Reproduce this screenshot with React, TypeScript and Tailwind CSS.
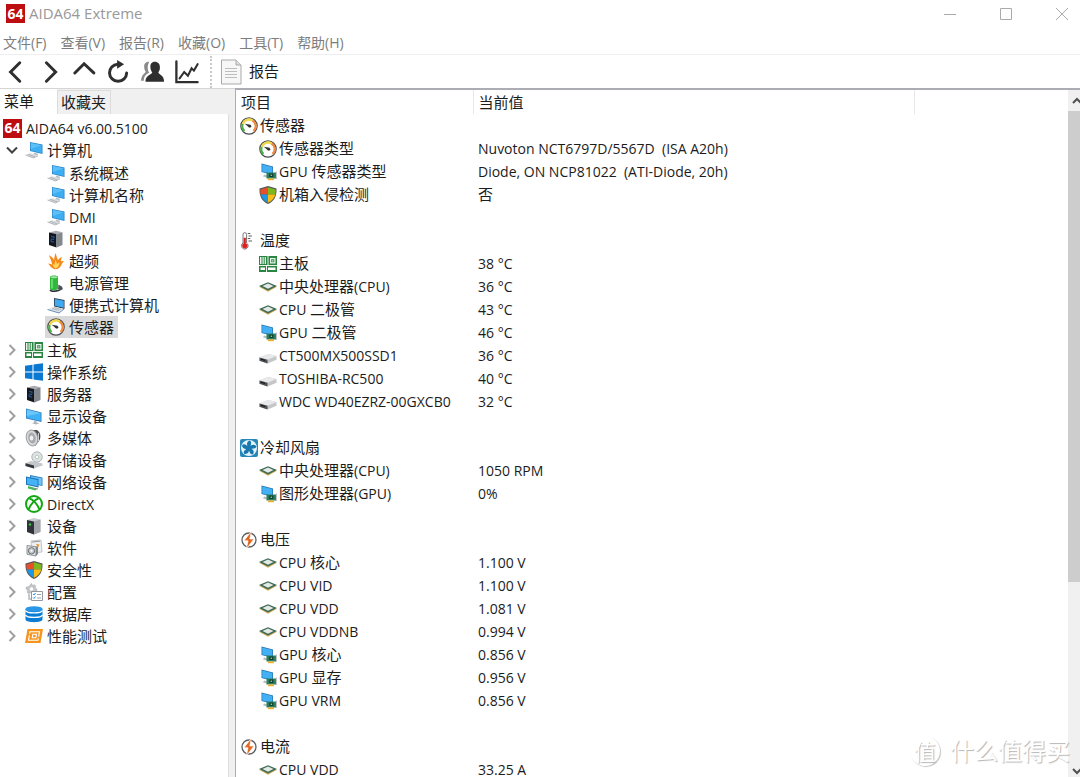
import type { ReactNode } from "react";
import clsx from "clsx";

type IconName =
  | "computer"
  | "server"
  | "flame"
  | "battery"
  | "laptop"
  | "gauge"
  | "board"
  | "windows"
  | "display"
  | "speaker"
  | "storage"
  | "network"
  | "directx"
  | "device"
  | "software"
  | "shield"
  | "config"
  | "database"
  | "benchmark"
  | "gpu"
  | "thermometer"
  | "chip"
  | "drive"
  | "fan"
  | "bolt";

const drawings: Record<IconName, ReactNode> = {
  computer: (
    <>
      <path d="M5 1 17.500 3.500V13L5 10z" fill="#2c86c9" />
      <path d="M5.800 2 16.700 4.300V12L5.800 9.400z" fill="#3eaef3" />
      <path d="M5.800 2 16.700 4.300 5.800 8z" fill="#5cbff8" />
      <path d="M9 11.500l4 1.300-.5 1.700-4-1z" fill="#b9bec3" />
      <path d="M.5 14 5 12.300l8 2L8.500 17z" fill="#d9dcdf" />
      <path d="M.5 14 8.500 17l4.500-2.200M3 13.300l7 2.500" stroke="#9ea4a9" strokeWidth="0.700" fill="none" />
    </>
  ),
  server: (
    <>
      <path d="M2 2.500 9 .8l6.500 1.500-6 1.700z" fill="#a9adb3" />
      <path d="M2 2.500 9.500 4v13.500L2 15z" fill="#14171d" />
      <path d="M9.500 4 15.500 2.300V15l-6 2.500z" fill="#83878e" />
      <path d="M4 6.500l3 .6M4 9l3 .6M4 11.500l3 .6M7 6.500v2M4 9.500v2" stroke="#2467b8" strokeWidth="0.900" />
    </>
  ),
  flame: (
    <>
      <path d="M7 17C4 16 3 13.500 1 11.500c2 .3 3 .5 4 1C5 9 2.500 6 2 3c2.500 1.500 4 3 5 5 .5-3 .8-5 1.500-7C9.500 4 10 6 11 8c1.300-1.300 2-2.500 4-3-.8 1.700-1 3-1 4.500 1-.5 2-.5 3-.3-1.500 1-2 2.500-3 4.500-1.500 2.800-4 4-7 3.300z" fill="#f58a1c" />
      <path d="M8.500 16.500c-2-1-2.500-3-3-4.500 1 .3 1.500.5 2 1 .3-2 .5-3 1-5 1 1.500 1 3 1.500 4 1-.8 1.500-1.300 2.500-1.500-.5 3-1 5-4 6z" fill="#ffd75a" />
    </>
  ),
  battery: (
    <>
      <path d="M3 3c0-2 8-2 8 0v11.500c0 2-8 2.500-8 .5z" fill="#2eb83c" />
      <path d="M3.500 3.200c0-1.300 7-1.300 7 0s-7 1.200-7 0z" fill="#a3e3a3" />
      <path d="M5 5v9.500" stroke="#7be37f" strokeWidth="1.500" />
      <path d="M3 16c1 1.500 5 1.500 9 .3l3.500-2" stroke="#2b3138" strokeWidth="1.500" fill="none" />
      <path d="M11.500 10.500l4 2.500-1.500 3-3-1z" fill="#4b525a" />
    </>
  ),
  laptop: (
    <>
      <path d="M7 2l10.500 2v9L7 10.500z" fill="#2b3d4f" />
      <path d="M7.800 3l9 1.800v7l-9-2z" fill="#3fa9f2" />
      <path d="M.5 13.500l6.500-3 10 2.500-5 4z" fill="#dbe1e6" />
      <path d="M.5 13.500 12 17l5-4" stroke="#5b86ab" strokeWidth="0.900" fill="none" />
      <path d="M5 12.500l7 2M7 11.500l7 2" stroke="#9aa5ae" strokeWidth="0.700" />
    </>
  ),
  gauge: (
    <>
      <circle cx="9" cy="9" r="8.200" fill="#fff" stroke="#4a4c4e" strokeWidth="1.200" />
      <path d="M4.500 14A6.500 6.500 0 0 1 2.800 7" stroke="#45b53f" strokeWidth="2" fill="none" />
      <path d="M2.800 7A6.500 6.500 0 0 1 12.500 3.500" stroke="#f0d94a" strokeWidth="2.400" fill="none" />
      <path d="M12.500 3.500A6.500 6.500 0 0 1 13.500 14" stroke="#f08a3e" strokeWidth="2.200" fill="none" />
      <path d="M4.800 6.800l5.800 1-1.200 3z" fill="#333" />
      <circle cx="10" cy="9.300" r="1.300" fill="#333" />
    </>
  ),
  board: (
    <>
      <path d="M0 1h18v16H0z" fill="#2b8542" />
      <path d="M1 2h1.500v7H1zM3.500 2h1.200v7H3.500zM5.700 2h1.200v7H5.700z" fill="#e9f5eb" />
      <path d="M9 1v9.500M0 10.500h18M7.500 10.500V17" stroke="#fff" strokeWidth="0.900" fill="none" />
      <path d="M11 3h5.500v5.500H11z" fill="#e9f5eb" />
      <path d="M12.200 4.200h3.100v3.100h-3.100z" fill="#2b8542" />
      <path d="M13.200 5.200h1.200v1.200h-1.200z" fill="#fff" />
      <path d="M1.500 12.500h4.500V15H1.500zM9 12.500h7.500V15H9z" fill="#fff" />
    </>
  ),
  windows: (
    <path d="M0 2.800 7.500 1.700v6.800H0zM8.500 1.500 18 .2v8.300H8.500zM0 9.500h7.500v6.800L0 15.200zM8.500 9.500H18v8.300L8.500 16.500z" fill="#0a78d1" />
  ),
  display: (
    <>
      <path d="M1 1.500 16.500 5.500V15L1 11.500z" fill="#2a7fc4" />
      <path d="M1.800 2.600 15.700 6.200v7.700L1.800 10.700z" fill="#41b1f5" />
      <path d="M1.800 2.600 15.700 6.200 1.800 9z" fill="#6bc6f9" />
      <path d="M9 13.500l2.500.6v1.500l3 .7-3.500 1.300-4-1.300 2-.7z" fill="#aeb4b9" />
    </>
  ),
  speaker: (
    <>
      <path d="M6 1h6c3.500 2 4.500 7 2 11l-4 5z" fill="#4a4e53" />
      <ellipse cx="7" cy="9" rx="5.700" ry="8" fill="#d7d9db" stroke="#9da1a4" transform="rotate(-12 7 9)" />
      <ellipse cx="7" cy="9" rx="3.700" ry="5.500" fill="#a7abaf" transform="rotate(-12 7 9)" />
      <ellipse cx="6.500" cy="9" rx="1.800" ry="2.600" fill="#f2f2f2" />
      <path d="M13.500 4v8" stroke="#c9cbcd" />
    </>
  ),
  storage: (
    <>
      <circle cx="12" cy="6" r="5.200" fill="#dfe2e4" stroke="#b0b5b9" />
      <circle cx="12" cy="6" r="1.800" fill="#fff" stroke="#9fc79f" strokeWidth="0.800" />
      <path d="M.5 12.300 6 10l11.500 2.500v2L9 17.500l-8.500-2.500z" fill="#c4c8cb" />
      <path d="M.5 12.300 9 14.500v3L.5 15z" fill="#33373b" />
    </>
  ),
  network: (
    <>
      <path d="M5 2l12.500 2.500V13L5 10.500z" fill="#2f7fc0" />
      <path d="M6 3.200l10.700 2v6.800L6 10z" fill="#6ac4f7" />
      <path d="M1 3.500 13.500 6v8.500L1 11.800z" fill="#1d73b8" />
      <path d="M2 4.700l10.600 2.200v6.400L2 11z" fill="#45b2f4" />
      <path d="M3 13l9 2.500-1.500 2L3 15.500z" fill="#3fba54" />
      <path d="M9 15.500l4 .5" stroke="#8a9096" />
    </>
  ),
  directx: (
    <>
      <circle cx="9" cy="9" r="8" fill="#fff" stroke="#12a812" strokeWidth="2" />
      <path d="M4.500 3.500C7.500 4 12.500 9 14.300 14.200M13.500 3.500C10.500 4 5.500 9 3.700 14.200" fill="none" stroke="#12a812" strokeWidth="2" />
    </>
  ),
  device: (
    <>
      <path d="M2 3l7-2 6.500 1.500V15L9 17.500 2 15z" fill="#c9cccf" />
      <path d="M2 3l7 1.500v13L2 15z" fill="#303438" />
      <path d="M9 4.500 15.500 2.500V15L9 17.500z" fill="#a3a7ab" />
      <circle cx="5" cy="7.500" r="1.200" fill="#34c93d" />
    </>
  ),
  software: (
    <>
      <path d="M6 2l10-1 1 12-10 1z" fill="#eceef0" stroke="#b4b8bc" strokeWidth="0.800" />
      <path d="M7 3l8-.8" stroke="#999" />
      <path d="M2 6.500l9 1.300V17l-9-1.700z" fill="#dfe2e4" stroke="#777c80" strokeWidth="0.800" />
      <path d="M11 7.800l2-1.300V15l-2 2z" fill="#82878b" />
      <circle cx="6.500" cy="11.800" r="3.200" fill="#c5cacd" stroke="#54595e" strokeWidth="0.800" />
      <circle cx="6.500" cy="11.800" r="1" fill="#fff" />
      <path d="M11 5l3.500.5-1.500 3z" fill="#f0922d" />
    </>
  ),
  shield: (
    <>
      <path d="M9 0 17.500 2.500C18 10 15 15.500 9 18 3 15.500 0 10 .5 2.500z" fill="#53585c" />
      <path d="M9 1.200V8.500H1.700C1.300 6.700 1.300 5 1.400 3.400z" fill="#e8502a" />
      <path d="M9 1.200 16.600 3.400c.1 1.600.1 3.300-.3 5.100H9z" fill="#7db81e" />
      <path d="M9 8.500v8.300C5 15 2.700 12.200 1.700 8.500z" fill="#1c98e6" />
      <path d="M9 8.500h7.300C15.300 12.200 13 15 9 16.800z" fill="#f9bd14" />
    </>
  ),
  config: (
    <>
      <path d="M6.500.5l1 2 2-.7 1.200 1.500-.8 1.900 2.100 1-.5 2-2 .3-.6 2-2 .8-1.600-1.500-2 .7-1.200-1.600.8-1.800L1 6l.5-2 2.200-.2z" fill="#c3c6c9" stroke="#a3a8ac" strokeWidth="0.600" />
      <circle cx="6.500" cy="6" r="1.800" fill="#fff" />
      <path d="M6.500 8.500h11v9h-11z" fill="#fff" stroke="#8a8f94" strokeWidth="0.900" />
      <path d="M8 11l1 1 1.500-2M8 14.500l1 1 1.500-2" stroke="#2f8be0" fill="none" />
      <path d="M12 11.500h4M12 15h4" stroke="#9ba0a4" />
      <path d="M4 11v5h2" stroke="#b5b9bd" fill="none" strokeWidth="1.500" />
    </>
  ),
  database: (
    <>
      <path d="M.5 4v10.500c0 3.500 17 3.500 17 0V4z" fill="#0d7dd4" />
      <ellipse cx="9" cy="4" rx="8.500" ry="2.700" fill="#2a96e6" />
      <path d="M.5 5.500c1 3.200 16 3.200 17 0M.5 10c1 3.200 16 3.200 17 0" stroke="#fff" strokeWidth="1.300" fill="none" />
    </>
  ),
  benchmark: (
    <>
      <path d="M2.500 2h15.500l-2.500 14H0z" fill="#f7941d" />
      <path d="M5 4.700h9.500L13 13.300H3.500z" fill="none" stroke="#fff" strokeWidth="1.100" />
      <path d="M7.800 7.200h3.700l-.6 3.600H7.200z" fill="none" stroke="#fff" strokeWidth="1.100" />
      <path d="M3 7.500h2.500M12.500 10.500h3" stroke="#f7941d" strokeWidth="1.300" />
    </>
  ),
  gpu: (
    <>
      <path d="M2.500.5l11.500 3v8.500l-11.500-3z" fill="#2473b3" />
      <path d="M3.200 1.500l10.100 2.600v6.900L3.200 8.400z" fill="#43b0f4" />
      <path d="M5 11.500l3 .8v2.200L4 13.500z" fill="#b7bcc1" />
      <path d="M7.500 9.500h9.500v6H7.500z" fill="#2c7f5d" />
      <path d="M10.300 10.500h4v3.500h-4z" fill="#0e3f2d" />
      <path d="M11.600 11.600h1.500v1.300h-1.500z" fill="#8fd0a9" />
      <path d="M17.400 8.500v7.500" stroke="#a6abae" strokeWidth="0.800" />
      <path d="M9 15.500h6v1.700H9z" fill="#f0ad27" />
    </>
  ),
  thermometer: (
    <>
      <path d="M3 2.500a1.800 1.800 0 0 1 3.600 0V11a3.300 3.300 0 1 1-3.600 0z" fill="#fff" stroke="#66696c" strokeWidth="0.900" />
      <path d="M4 6h1.700v5.500a2.400 2.400 0 1 1-1.700 0z" fill="#dd1f1f" stroke="#dd1f1f" strokeWidth="0.600" />
      <path d="M7.800 1.500h2.500M8.500 4H12M7.800 6.500h2.500M8.500 9H12" stroke="#5d6063" strokeWidth="1.100" />
    </>
  ),
  chip: (
    <>
      <path d="M0 8.800l9 5 9-5-9-1z" fill="#d3ae5e" />
      <path d="M0 8 9 4.200 18 8l-9 4.600z" fill="#3c6a53" />
      <path d="M3.500 8 9 5.600 14.500 8 9 10.800z" fill="#e4e9e6" />
    </>
  ),
  drive: (
    <>
      <path d="M.5 10.500 9 7l8.500 2v3.700L8.500 16.500l-8-2.700z" fill="#c4c6c8" />
      <path d="M.5 10.500 9 7l8.500 2-9 3.700z" fill="#e8e9ea" />
      <path d="M.5 10.500l8 2.200v3.800l-8-2.700z" fill="#4c4f52" />
      <path d="M2 12.200l4 1.200" stroke="#111" />
    </>
  ),
  fan: (
    <>
      <rect width="18" height="18" rx="2" fill="#2687bb" />
      <circle cx="9" cy="9" r="8" fill="#e4f3fa" />
      <g fill="#1878ad">
        <path d="M9 9C6 6.500 6.500 2.500 9.500 1.500c2.500.8 2 4.500-.5 7.500z" />
        <path d="M9 9C6 6.500 6.500 2.500 9.500 1.500c2.500.8 2 4.500-.5 7.500z" transform="rotate(72 9 9)" />
        <path d="M9 9C6 6.500 6.500 2.500 9.500 1.500c2.500.8 2 4.500-.5 7.500z" transform="rotate(144 9 9)" />
        <path d="M9 9C6 6.500 6.500 2.500 9.500 1.500c2.500.8 2 4.500-.5 7.500z" transform="rotate(216 9 9)" />
        <path d="M9 9C6 6.500 6.500 2.500 9.500 1.500c2.500.8 2 4.500-.5 7.500z" transform="rotate(288 9 9)" />
        <circle cx="9" cy="9" r="2.600" />
      </g>
    </>
  ),
  bolt: (
    <>
      <circle cx="9" cy="9" r="7" fill="#fff" stroke="#5a5d60" strokeWidth="1.300" />
      <path d="M11.500 0 4 9.800h4L6.300 18 14 8H9.800z" fill="#e2661f" stroke="#fff" strokeWidth="0.700" />
    </>
  ),
};

function Icon({ name }: { name: IconName }) {
  return (
    <svg viewBox="0 0 18 18" className="size-[18px] shrink-0" aria-hidden="true">
      {drawings[name]}
    </svg>
  );
}

function Logo() {
  return (
    <span className="flex size-[19px] shrink-0 items-center justify-center bg-[#bd0d10] text-[14px] leading-none font-bold text-white">
      64
    </span>
  );
}

// Latin runs are set one step smaller than the Chinese around them
function Label({ text }: { text: string }) {
  const runs = text.match(/[\x20-\x7e°]+|[^\x20-\x7e°]+/g) ?? [];
  return (
    <span className="text-[15px] leading-none whitespace-pre">
      {runs.map((run, i) =>
        /^[\x20-\x7e°]/.test(run) ? (
          <span key={i} className="text-[14px]">
            {run}
          </span>
        ) : (
          run
        ),
      )}
    </span>
  );
}

const menus = ["文件(F)", "查看(V)", "报告(R)", "收藏(O)", "工具(T)", "帮助(H)"];

const computerItems: { label: string; icon: IconName }[] = [
  { label: "系统概述", icon: "computer" },
  { label: "计算机名称", icon: "computer" },
  { label: "DMI", icon: "computer" },
  { label: "IPMI", icon: "server" },
  { label: "超频", icon: "flame" },
  { label: "电源管理", icon: "battery" },
  { label: "便携式计算机", icon: "laptop" },
  { label: "传感器", icon: "gauge" },
];

const categories: { label: string; icon: IconName }[] = [
  { label: "主板", icon: "board" },
  { label: "操作系统", icon: "windows" },
  { label: "服务器", icon: "server" },
  { label: "显示设备", icon: "display" },
  { label: "多媒体", icon: "speaker" },
  { label: "存储设备", icon: "storage" },
  { label: "网络设备", icon: "network" },
  { label: "DirectX", icon: "directx" },
  { label: "设备", icon: "device" },
  { label: "软件", icon: "software" },
  { label: "安全性", icon: "shield" },
  { label: "配置", icon: "config" },
  { label: "数据库", icon: "database" },
  { label: "性能测试", icon: "benchmark" },
];

type Reading = [icon: IconName, label: string, value: string];

const groups: { label: string; icon: IconName; rows: Reading[] }[] = [
  {
    label: "传感器",
    icon: "gauge",
    rows: [
      ["gauge", "传感器类型", "Nuvoton NCT6797D/5567D  (ISA A20h)"],
      ["gpu", "GPU 传感器类型", "Diode, ON NCP81022  (ATI-Diode, 20h)"],
      ["shield", "机箱入侵检测", "否"],
    ],
  },
  {
    label: "温度",
    icon: "thermometer",
    rows: [
      ["board", "主板", "38 °C"],
      ["chip", "中央处理器(CPU)", "36 °C"],
      ["chip", "CPU 二极管", "43 °C"],
      ["gpu", "GPU 二极管", "46 °C"],
      ["drive", "CT500MX500SSD1", "36 °C"],
      ["drive", "TOSHIBA-RC500", "40 °C"],
      ["drive", "WDC WD40EZRZ-00GXCB0", "32 °C"],
    ],
  },
  {
    label: "冷却风扇",
    icon: "fan",
    rows: [
      ["chip", "中央处理器(CPU)", "1050 RPM"],
      ["gpu", "图形处理器(GPU)", "0%"],
    ],
  },
  {
    label: "电压",
    icon: "bolt",
    rows: [
      ["chip", "CPU 核心", "1.100 V"],
      ["chip", "CPU VID", "1.100 V"],
      ["chip", "CPU VDD", "1.081 V"],
      ["chip", "CPU VDDNB", "0.994 V"],
      ["gpu", "GPU 核心", "0.856 V"],
      ["gpu", "GPU 显存", "0.956 V"],
      ["gpu", "GPU VRM", "0.856 V"],
    ],
  },
  {
    label: "电流",
    icon: "bolt",
    rows: [["chip", "CPU VDD", "33.25 A"]],
  },
];

function TitleBar() {
  return (
    <header className="flex h-[27px] shrink-0 items-center pl-1.5">
      <Logo />
      <h1 className="ml-1 flex-1 text-[15px] text-[#999]">AIDA64 Extreme</h1>
      <div className="flex items-center gap-9 pr-2 text-[#aaa]">
        <button aria-label="最小化" className="flex size-5 items-center justify-center">
          <svg viewBox="0 0 14 14" className="size-3.5" stroke="currentColor">
            <path d="M1 7.500h12" />
          </svg>
        </button>
        <button aria-label="最大化" className="flex size-5 items-center justify-center">
          <svg viewBox="0 0 14 14" className="size-3.5" stroke="currentColor" fill="none">
            <path d="M1.500 1.500h11v11h-11z" />
          </svg>
        </button>
        <button aria-label="关闭" className="flex size-5 items-center justify-center">
          <svg viewBox="0 0 14 14" className="size-3.5" stroke="currentColor">
            <path d="M1 1l12 12M13 1 1 13" />
          </svg>
        </button>
      </div>
    </header>
  );
}

function ToolButton({ label, children }: { label: string; children: ReactNode }) {
  return (
    <button aria-label={label} className="flex h-8 w-[34px] items-center justify-center text-[#2f2f2f]">
      <svg
        viewBox="0 0 26 26"
        className="size-6"
        fill="none"
        stroke="currentColor"
        strokeWidth="3.200"
        strokeLinecap="round"
      >
        {children}
      </svg>
    </button>
  );
}

function Toolbar() {
  return (
    <div className="flex h-[34px] shrink-0 items-center border-t border-[#eee]">
      <ToolButton label="后退">
        <path d="M16 3 6 13l10 10" />
      </ToolButton>
      <ToolButton label="前进">
        <path d="M8 3l10 10L8 23" />
      </ToolButton>
      <ToolButton label="向上">
        <path d="M2 14 12 4l10.500 10" />
      </ToolButton>
      <ToolButton label="刷新">
        <path d="M11.500 4.500A9.300 9.300 0 1 0 21.300 14" />
        <path d="M11 0l7.500 4.500L11 9.500z" fill="currentColor" stroke="none" />
      </ToolButton>
      <ToolButton label="用户">
        <g stroke="none">
          <path d="M9 2c-3.500-.5-6 2-5.500 6 0 2 1 3.500 1.500 4.500 0 2-4.500 2.500-5 10h3c0-6 4-7.500 6-9C7 12 6.500 6 9 2z" fill="#8a8a8a" />
          <path d="M15 2c-3.500 0-5 2.500-4.800 6 .1 2.300 1 4 2 5.200 0 2.800-7.200 2.300-7.400 10.300H25c0-8-6.200-7.500-6.200-10.300 1-1.200 1.700-3 1.700-5.200 0-3.500-2-6-5.500-6z" fill="currentColor" />
        </g>
      </ToolButton>
      <ToolButton label="图表">
        <path d="M1.500 1.500V24H24.500" strokeWidth="2.500" />
        <path d="M5 20l5-7 4 4 4-8 2.500 2.500 4-7" strokeWidth="2.200" />
      </ToolButton>
      <div className="ml-1.5 h-8 border-l-2 border-dotted border-[#c9c9c9]" />
      <button className="ml-2 flex items-center gap-[7px] text-[15px] text-[#1c1c1c]">
        <svg viewBox="0 0 22 26" className="h-[26px] w-[22px]">
          <path d="M1.500 1h14.500l5 5v19H1.500z" fill="#f7f7f7" stroke="#a9a9a9" />
          <path d="M16 1v5h5" fill="#ddd" stroke="#a9a9a9" />
          <path d="M5 9.500h12M5 12.500h12M5 15.500h12M5 18.500h12" stroke="#bdbdbd" strokeWidth="1.200" />
        </svg>
        报告
      </button>
    </div>
  );
}

function Chevron({ open }: { open?: boolean }) {
  return (
    <svg
      viewBox="0 0 12 12"
      className={clsx("size-3 shrink-0", open ? "text-[#404040]" : "text-[#a0a0a0]")}
      fill="none"
      stroke="currentColor"
      strokeWidth="2"
      aria-hidden="true"
    >
      <path d={open ? "M1 3.500l5 5 5-5" : "M3.500 1l5 5-5 5"} />
    </svg>
  );
}

function Sidebar() {
  return (
    <aside className="flex w-[235px] shrink-0 flex-col border-t border-[#d5d5d5] bg-[#f0f0f0] pr-1.5">
      <div className="flex h-[25px] shrink-0 items-end text-[15px]">
        <button className="flex h-full w-[57px] items-center bg-white pl-1">菜单</button>
        <button className="flex h-6 w-[54px] items-center border border-b-0 border-[#dcdcdc] pl-[3px]">收藏夹</button>
      </div>
      <nav className="min-h-0 flex-1 overflow-hidden border-r border-[#dedede] bg-white pt-[3px]">
        <button className="flex h-[22px] items-center gap-1 pl-[3px]">
          <Logo />
          <Label text="AIDA64 v6.00.5100" />
        </button>
        <ul>
          <li>
            <button className="flex h-[22px] items-center pl-1.5">
              <Chevron open />
              <span className="ml-[7px] flex items-center gap-1">
                <Icon name="computer" />
                <Label text="计算机" />
              </span>
            </button>
            <ul className="py-px pl-[45px]">
              {computerItems.map((item) => (
                <li key={item.label}>
                  <button
                    className={clsx(
                      "flex h-[22px] items-center gap-1 pr-1 pl-0.5",
                      item.label === "传感器" && "bg-[#d9d9d9]",
                    )}
                  >
                    <Icon name={item.icon} />
                    <Label text={item.label} />
                  </button>
                </li>
              ))}
            </ul>
          </li>
          {categories.map((item) => (
            <li key={item.label}>
              <button className="flex h-[22px] items-center pl-1.5">
                <Chevron />
                <span className="ml-[7px] flex items-center gap-1">
                  <Icon name={item.icon} />
                  <Label text={item.label} />
                </span>
              </button>
            </li>
          ))}
        </ul>
      </nav>
    </aside>
  );
}

function SensorTable() {
  return (
    <table className="w-full table-fixed border-collapse">
      <colgroup>
        <col className="w-[237px]" />
        <col className="w-[441px]" />
        <col />
      </colgroup>
      <thead>
        <tr className="h-6 text-left text-[15px]">
          <th className="border-r border-[#e8e8e8] p-0 pl-[5px] font-normal">项目</th>
          <th className="border-r border-[#e8e8e8] p-0 pl-[5px] font-normal">当前值</th>
          <td />
        </tr>
      </thead>
      {groups.map((group, i) => (
        <tbody key={group.label}>
          {i > 0 && (
            <tr className="h-[23px]">
              <td colSpan={3} />
            </tr>
          )}
          <tr className="h-[23px]">
            <th colSpan={3} className="p-0 pl-1 text-left font-normal">
              <div className="flex h-[23px] items-center gap-0.5">
                <Icon name={group.icon} />
                <Label text={group.label} />
              </div>
            </th>
          </tr>
          {group.rows.map(([icon, label, value]) => (
            <tr key={label} className="h-[23px]">
              <td className="p-0 pl-[23px]">
                <div className="flex h-[23px] items-center gap-0.5">
                  <Icon name={icon} />
                  <Label text={label} />
                </div>
              </td>
              <td className="p-0 pl-[5px]">
                <div className="flex h-[23px] items-center">
                  <Label text={value} />
                </div>
              </td>
              <td />
            </tr>
          ))}
        </tbody>
      ))}
    </table>
  );
}

function ScrollBar() {
  return (
    <div className="flex w-3 shrink-0 flex-col overflow-hidden bg-[#f0f0f0] text-[#505050]">
      <button aria-label="向上滚动" className="flex h-[21px] w-[17px] shrink-0 items-center justify-center">
        <svg viewBox="0 0 10 10" className="size-2.5" fill="none" stroke="currentColor" strokeWidth="2">
          <path d="M1 7l4-4 4 4" />
        </svg>
      </button>
      <div className="min-h-0 flex-1">
        <div className="h-[72%] bg-[#cdcdcd]" />
      </div>
      <button aria-label="向下滚动" className="flex h-3 w-[17px] shrink-0 items-center justify-center">
        <svg viewBox="0 0 10 10" className="size-2.5" fill="none" stroke="currentColor" strokeWidth="2">
          <path d="M1 3l4 4 4-4" />
        </svg>
      </button>
    </div>
  );
}

export default function App() {
  return (
    <div className="relative flex h-screen flex-col overflow-hidden bg-white font-['Open_Sans','Noto_Sans_CJK_SC',sans-serif] text-[#1c1c1c]">
      <TitleBar />
      <nav className="flex h-[27px] shrink-0 items-center gap-3.5 pt-1 pl-[3px] text-[14px] text-[#7d7d7d]">
        {menus.map((menu) => (
          <button key={menu}>{menu}</button>
        ))}
      </nav>
      <Toolbar />
      <div className="flex min-h-0 flex-1">
        <Sidebar />
        <main className="flex min-w-0 flex-1 border-t-2 border-l border-[#acacb4]">
          <div className="min-w-0 flex-1 overflow-hidden">
            <SensorTable />
          </div>
          <ScrollBar />
        </main>
      </div>
      <div className="pointer-events-none absolute right-2.5 bottom-2.5 flex items-center gap-2.5 text-white [text-shadow:1px_1px_1px_#b5b5b5]">
        <span className="flex size-[30px] items-center justify-center rounded-full text-[22px] leading-none shadow-[1px_1px_1px_#c4c4c4]">
          值
        </span>
        <span className="text-[24px] leading-8">什么值得买</span>
      </div>
    </div>
  );
}
